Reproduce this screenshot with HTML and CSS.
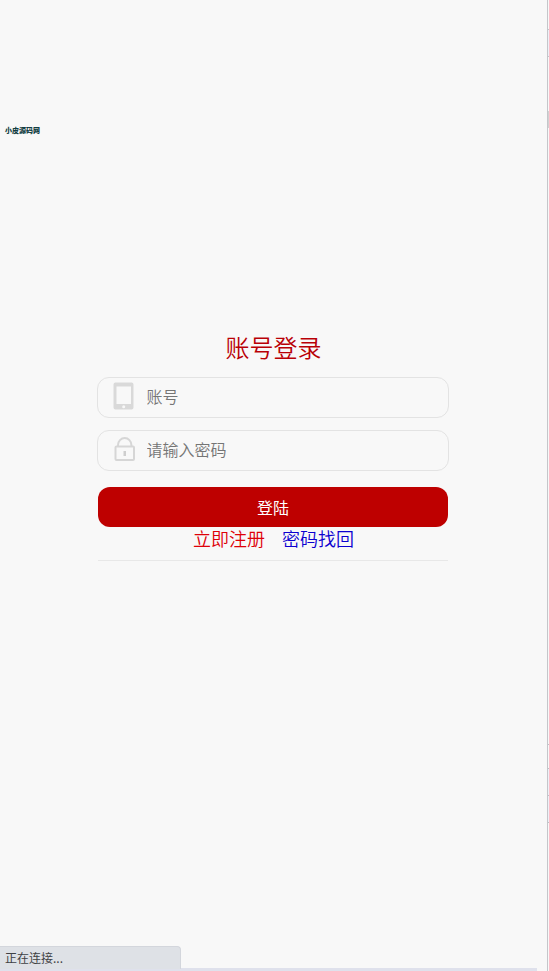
FILE: index.html
```html
<!DOCTYPE html>
<html lang="zh-CN">
<head>
<meta charset="utf-8">
<title>账号登录</title>
<link rel="stylesheet" href="styles.css">
</head>
<body>
<div class="screen">
  <main class="page">
    <div class="logo">小皮源码网</div>
    <form class="login">
      <h1 class="title">账号登录</h1>
      <label class="field">
        <svg class="icon" width="24" height="30" viewBox="0 0 24 30"><path fill="#d9d9d9" fill-rule="evenodd" d="M3.500 0.500H19.500Q21.500 0.500 21.500 2.500V25.500Q21.500 27.500 19.500 27.500H3.500Q1.500 27.500 1.500 25.500V2.500Q1.500 0.500 3.500 0.500ZM4.500 4.500V22H19V4.500Z"/><circle cx="11.700" cy="24.700" r="1.500" fill="#f8f8f8"/></svg>
        <input class="input" type="text" placeholder="账号">
      </label>
      <label class="field">
        <svg class="icon" width="24" height="30" viewBox="0 0 24 30"><g fill="none" stroke="#d6d6d6" stroke-width="2"><rect x="3.500" y="11.500" width="18.500" height="13.500" rx="1"/><path d="M6 11.500V10A6.700 6.900 0 0 1 19.400 10V11.500"/></g><path fill="#cecece" d="M11.500 16h2.500v5h-2.500z"/></svg>
        <input class="input" type="password" placeholder="请输入密码">
      </label>
      <button class="submit" type="button">登陆</button>
      <nav class="links"><a class="register" href="#">立即注册</a><a class="recover" href="#">密码找回</a></nav>
    </form>
  </main>
  <aside class="edge">
    <span class="edge-top"></span><span class="edge-box"></span><span class="edge-thumb"></span>
    <span class="edge-space"></span><span class="edge-row"></span><span class="edge-row tinted"></span><span class="edge-row tinted last"></span>
  </aside>
  <div class="bottom-strip"></div>
  <div class="status">正在连接...</div>
</div>
</body>
</html>
```
FILE: styles.css
```css
* { box-sizing: border-box; }
body {
  margin: 0;
  background: #f8f8f8;
  font-family: "Noto Sans CJK SC", sans-serif;
  font-weight: 350;
}
.screen {
  position: relative;
  display: flex;
  height: 971px;
  overflow: hidden;
}
.page {
  flex: 1;
  padding-top: 124px;
}
.logo {
  height: 12px;
  padding-left: 5px;
  color: #123e42;
  font-size: 7px;
  font-weight: 900;
  line-height: 12px;
}
.login {
  width: 352px;
  margin: 192px 0 0 97px;
}
.title {
  height: 49px;
  margin: 0;
  padding-left: 1px;
  color: #b90006;
  font-size: 24px;
  font-weight: 350;
  line-height: 38px;
  text-align: center;
}
.field {
  display: flex;
  align-items: flex-start;
  height: 41px;
  margin-bottom: 12px;
  padding: 4px 14px;
  border: 1px solid #e3e3e3;
  border-radius: 12px;
}
.input {
  flex: 1;
  min-width: 0;
  height: 28px;
  margin-left: 10.5px;
  padding: 0;
  border: 0;
  outline: 0;
  background: transparent;
  font: 350 16px/28px "Noto Sans CJK SC", sans-serif;
}
.input::placeholder { color: #757575; opacity: 1; }
.submit {
  display: block;
  width: 350px;
  height: 40px;
  margin: 16px 1px 0;
  padding: 0;
  border: 0;
  border-radius: 12px;
  background: #be0000;
  color: #fff;
  font: 400 16px/40px "Noto Sans CJK SC", sans-serif;
}
.links {
  display: flex;
  gap: 17px;
  width: 350px;
  height: 34px;
  margin-left: 1px;
  padding-left: 95px;
  border-bottom: 1px solid #e8e8e8;
  font-size: 18px;
  line-height: 22px;
}
.links a { text-decoration: none; }
.register { color: #de0008; }
.recover { color: #0c00d0; }
.edge {
  display: flex;
  flex-direction: column;
  width: 2px;
  border-left: 1px solid #c5c6ca;
}
.edge-top { height: 29px; }
.edge-box {
  height: 28px;
  border: solid #c5c6ca;
  border-width: 1px 0;
  background: #eef0f7;
}
.edge-thumb { height: 17px; margin-top: 54px; background: #d2d2d2; }
.edge-space { height: 616px; }
.edge-row { height: 24px; border-top: 1px solid #c0c1c6; }
.tinted { height: 27px; background: #eef0f7; }
.last { height: 28px; border-bottom: 1px solid #c0c1c6; }
.bottom-strip {
  position: absolute;
  left: 0;
  bottom: 0;
  width: 537px;
  height: 3px;
  background: #dfe1ec;
}
.status {
  position: absolute;
  left: 0;
  bottom: 2px;
  width: 181px;
  height: 23px;
  padding-left: 5px;
  border: 1px solid #d3d6dc;
  border-width: 1px 1px 0 0;
  border-radius: 0 4px 0 0;
  background: #dee1e6;
  color: #3f4145;
  font-size: 12px;
  font-weight: 400;
  line-height: 22px;
}
```
